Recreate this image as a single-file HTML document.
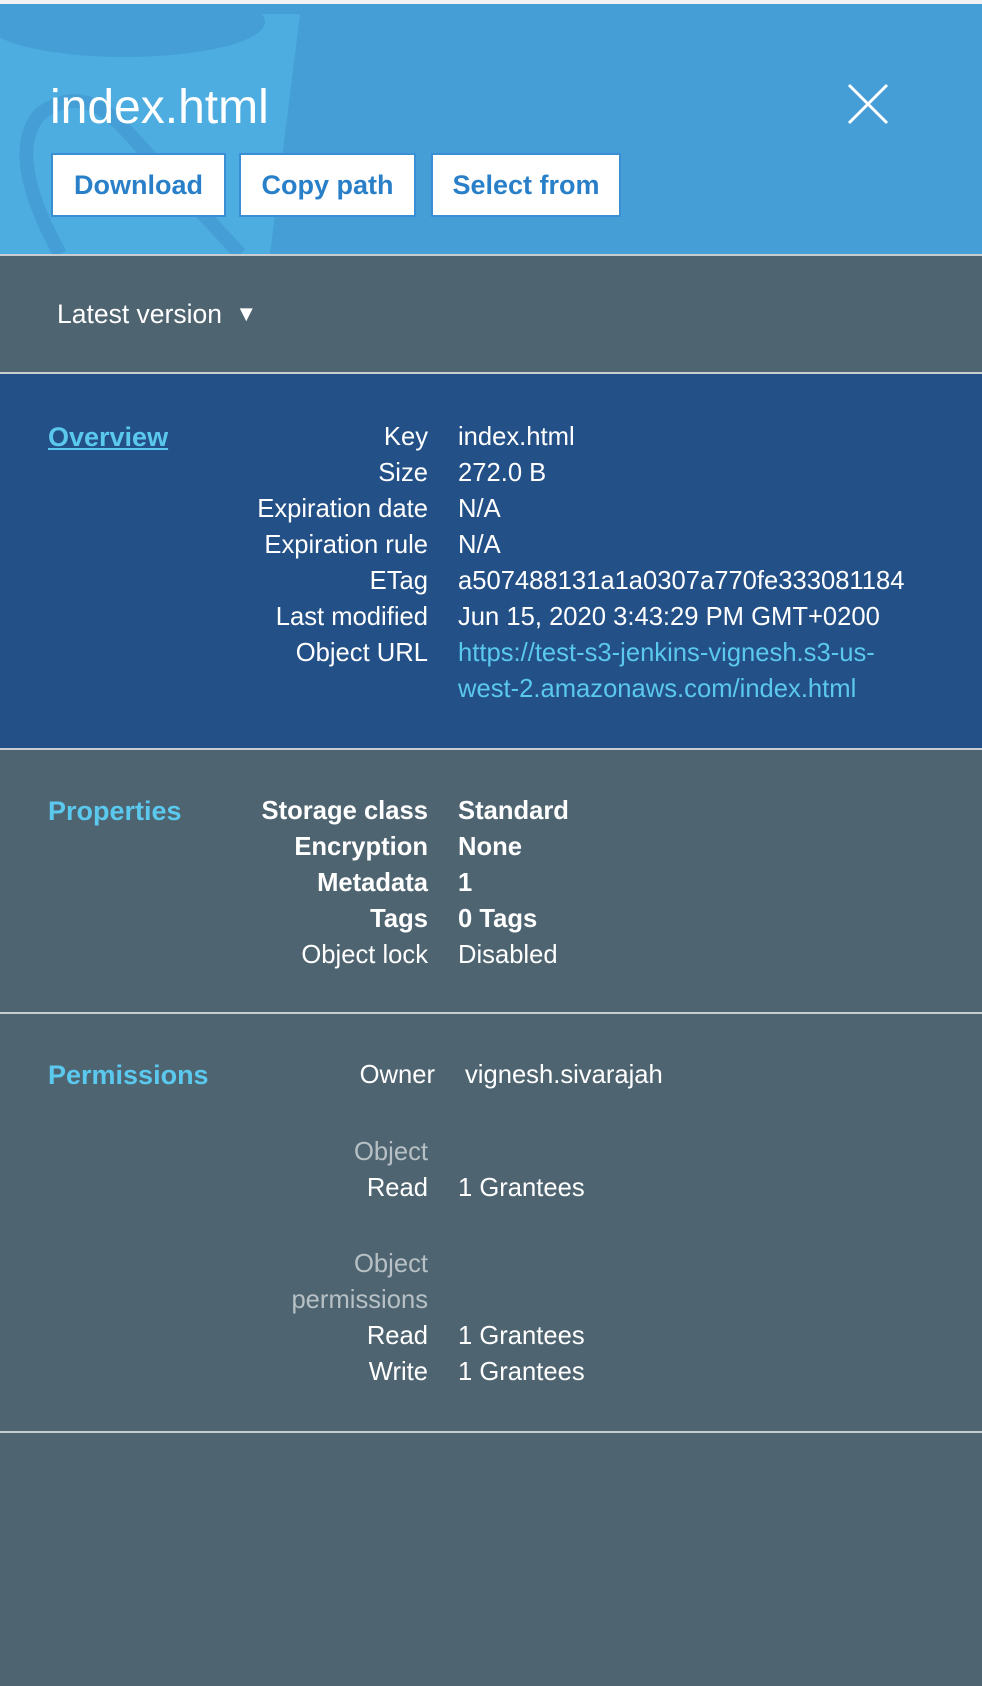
<!DOCTYPE html>
<html><head><meta charset="utf-8"><style>
*{margin:0;padding:0;box-sizing:border-box}
body{width:982px;height:1686px;background:#4e6470;font-family:"Liberation Sans",Arial,sans-serif;color:#fff;position:relative;overflow:hidden}
.top{position:absolute;left:0;top:0;width:982px;height:4px;background:#f2f2f2}
.hdr{position:absolute;left:0;top:4px;width:982px;height:250px;background:#459fd6;overflow:hidden}
.hr{position:absolute;left:0;width:982px;height:2px;background:#c8cdd0}
.t{position:absolute;white-space:nowrap;font-size:25.6px;line-height:36px}
.r{text-align:right}
.btn{position:absolute;top:153px;height:64px;background:#fff;border:2px solid #3a8fd4;color:#2a80c8;font-size:27px;font-weight:bold;text-align:center;line-height:60px}
.lnk{color:#5bc8ee;font-weight:bold;font-size:27px}
.b{font-weight:bold}
.g{color:#b7c0c5}
</style></head><body>
<div class="top"></div>
<div class="hdr">
<svg width="982" height="250" style="position:absolute;left:0;top:0">
<path d="M0 10 L300 10 L270 250 L0 250 Z" fill="#4dade0"/>
<ellipse cx="125" cy="18" rx="140" ry="35" fill="#459fd6"/>
<path d="M60 250 Q5 150 40 110 Q80 80 120 120 L240 250" fill="none" stroke="#459fd6" stroke-width="14"/>
</svg>
<div style="position:absolute;left:50px;top:74px;font-size:48px;line-height:60px">index.html</div>
<svg width="44" height="44" style="position:absolute;left:846px;top:78px"><path d="M3 3 L41 41 M41 3 L3 41" stroke="#fff" stroke-width="3"/></svg>
</div>
<div class="btn" style="left:51px;width:175px">Download</div>
<div class="btn" style="left:239px;width:177px">Copy path</div>
<div class="btn" style="left:431px;width:190px">Select from</div>
<div class="hr" style="top:254px"></div>
<div class="t" style="left:57px;top:296px;font-size:26.5px">Latest version <span style="font-size:22px;position:relative;top:-2px;left:6px">▼</span></div>
<div class="hr" style="top:372px"></div>
<div style="position:absolute;left:0;top:374px;width:982px;height:375px;background:#235087"></div>
<div class="t lnk" style="left:48px;top:419px;text-decoration:underline">Overview</div>
<div class="t r" style="right:554px;top:419px">Key<br>Size<br>Expiration date<br>Expiration rule<br>ETag<br>Last modified<br>Object URL</div>
<div class="t" style="left:458px;top:419px">index.html<br>272.0 B<br>N/A<br>N/A<br>a507488131a1a0307a770fe333081184<br>Jun 15, 2020 3:43:29 PM GMT+0200<br><span style="color:#5bc8ee">https://test-s3-jenkins-vignesh.s3-us-<br>west-2.amazonaws.com/index.html</span></div>
<div class="hr" style="top:748px"></div>
<div class="t lnk" style="left:48px;top:793px">Properties</div>
<div class="t r" style="right:554px;top:793px"><span class="b">Storage class<br>Encryption<br>Metadata<br>Tags</span><br>Object lock</div>
<div class="t" style="left:458px;top:793px"><span class="b">Standard<br>None<br>1<br>0 Tags</span><br>Disabled</div>
<div class="hr" style="top:1012px"></div>
<div class="t lnk" style="left:48px;top:1057px">Permissions</div>
<div class="t r" style="right:547px;top:1057px">Owner</div>
<div class="t" style="left:465px;top:1057px">vignesh.sivarajah</div>
<div class="t r" style="right:554px;top:1134px"><span class="g">Object</span><br>Read</div>
<div class="t" style="left:458px;top:1170px">1 Grantees</div>
<div class="t r" style="right:554px;top:1246px"><span class="g">Object<br>permissions</span><br>Read<br>Write</div>
<div class="t" style="left:458px;top:1318px">1 Grantees<br>1 Grantees</div>
<div class="hr" style="top:1431px"></div>
</body></html>
